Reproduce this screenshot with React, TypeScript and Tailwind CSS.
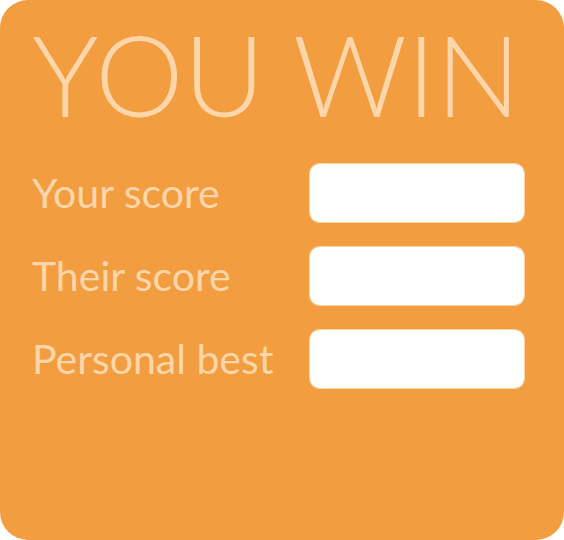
const rows = [
  { id: "your-score", label: "Your score" },
  { id: "their-score", label: "Their score" },
  { id: "personal-best", label: "Personal best" },
];

export default function App() {
  return (
    <main className="min-h-screen rounded-[28px] bg-[#f29d40] pt-2 pr-10 pl-8 font-['Lato',sans-serif] text-[#ffd6a9]">
      <h1 className="text-[112px] leading-[132px] font-light whitespace-nowrap">YOU WIN</h1>
      <form className="mt-6 flex flex-col gap-[25px]">
        {rows.map(({ id, label }) => (
          <div key={id} className="flex items-center justify-between">
            <label htmlFor={id} className="text-[41px] leading-[58px] whitespace-nowrap">
              {label}
            </label>
            <input
              id={id}
              type="text"
              readOnly
              className="h-[58px] w-[214px] shrink-0 rounded-[9px] bg-white px-4 text-3xl text-[#f29d40] outline outline-[#fbd3a5]"
            />
          </div>
        ))}
      </form>
    </main>
  );
}
